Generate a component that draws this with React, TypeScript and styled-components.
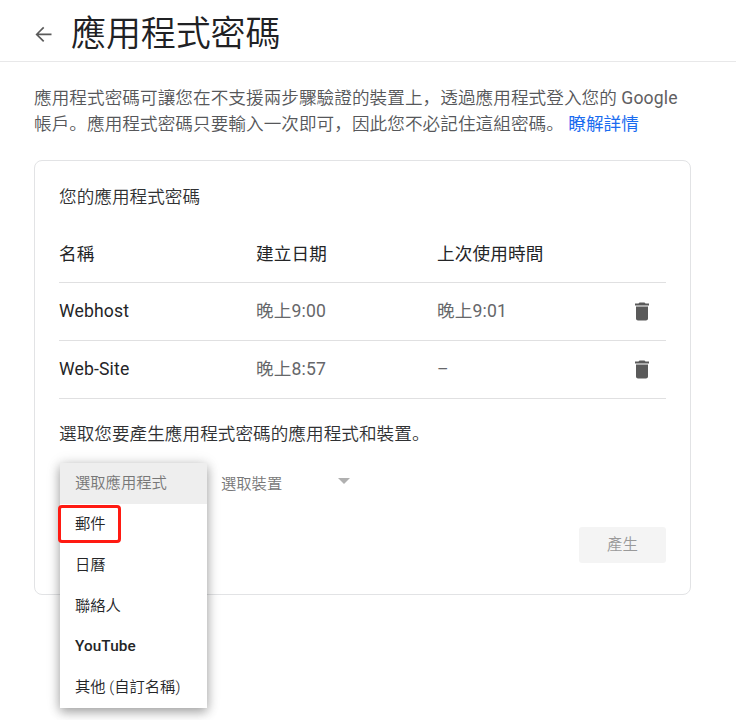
import React from 'react';
import styled, { createGlobalStyle } from 'styled-components';

const Global = createGlobalStyle`
  * { box-sizing: border-box; }
  body { margin: 0; background: #fff; color: #202124; overflow: hidden;
    font-family: Roboto, "Noto Sans CJK SC", sans-serif; font-weight: 350; }
`;
const Page = styled.div`width: 736px; height: 720px; overflow: hidden;`;
const Header = styled.header`
  height: 62px; display: flex; align-items: center; padding: 8px 0 0 31px; gap: 16px;
  border-bottom: 1px solid #e8e8e9;
`;
const IconSvg = styled.svg`display: block; fill: #5a5a5a;`;
const Title = styled.h1`
  margin: 0; padding-top: 1px; font-size: 35px; line-height: 52px; font-weight: 350; letter-spacing: -.1px; white-space: nowrap;
`;
const Intro = styled.p`
  margin: 24px 0 0 34px; font-size: 17.6px; line-height: 25.5px; color: #56575a;
  white-space: nowrap; letter-spacing: .07px;
`;
const Latin = styled.span`font-weight: 400; color: #5f6062; letter-spacing: .15px;`;
const Link = styled.a`color: #1a6cf0; text-decoration: none; font-weight: 400;`;
const Card = styled.section`
  margin: 23px 0 0 34px; width: 657px; height: 435px; border: 1px solid #e2e3e5;
  border-radius: 8px; padding: 23px 24px 0;
`;
const Text = styled.div`font-size: 17.6px; line-height: 26px; color: #303133; white-space: nowrap; letter-spacing: .05px;`;
const Row = styled.div<{ $head?: boolean }>`
  display: grid; grid-template-columns: 197px 181px 1fr 36px; align-items: center;
  height: ${p => (p.$head ? 73 : 58)}px; font-size: 17.6px;
  padding-top: ${p => (p.$head ? 17 : 0)}px;
  border-bottom: 1px solid #e0e0e1;
`;
const Cell = styled.span<{ $muted?: boolean }>`
  color: ${p => (p.$muted ? '#66676a' : '#242527')};
  font-weight: 400;
  letter-spacing: .15px; line-height: 26px; padding-bottom: 2px;
`;
const Prompt = styled(Text)`margin-top: 22px;`;
const Controls = styled.div`display: flex; height: 42px; margin-top: 16px; align-items: center;`;
const SelectAnchor = styled.div`position: relative; width: 148px; height: 42px; margin-right: 14px;`;
const Menu = styled.ul`
  position: absolute; left: 1px; top: 0; margin: 0; padding: 0; width: 147px; list-style: none;
  background: #fff; box-shadow: 0 4px 10px rgba(0,0,0,.3), 0 1px 14px rgba(0,0,0,.14); z-index: 1;
`;
const Item = styled.li<{ $active?: boolean; $medium?: boolean }>`
  height: 40.85px; line-height: 41.5px; padding-left: 15px; font-size: 15.3px; white-space: nowrap;
  font-weight: ${p => (p.$medium ? 500 : 350)};
  letter-spacing: ${p => (p.$medium ? '.1px' : 'normal')};
  color: ${p => (p.$active ? '#777' : '#242527')};
  background: ${p => (p.$active ? '#eee' : '#fff')};
`;
const Highlight = styled.div`
  position: absolute; z-index: 2; left: -1px; top: 42px; width: 63px; height: 38px;
  border: 3px solid #ff1a12; border-radius: 4px;
`;
const Device = styled.div`
  display: flex; width: 129px; align-items: center; justify-content: space-between;
  font-size: 15.3px; color: #777; padding-bottom: 5px;
`;
const Arrow = styled.svg`fill: #b0b0b0; display: block; margin-bottom: 2px;`;
const Actions = styled.div`display: flex; justify-content: flex-end; margin-top: 22px;`;
const Button = styled.button`
  width: 87px; height: 36px; border: 0; border-radius: 3px; background: #f4f4f4; color: #999;
  font: 350 15.4px Roboto, "Noto Sans CJK SC", sans-serif; padding: 0 0 4px;
`;

const passwords = [
  { name: 'Webhost', created: '晚上9:00', used: '晚上9:01' },
  { name: 'Web-Site', created: '晚上8:57', used: '–' },
];
const apps = ['選取應用程式', '郵件', '日曆', '聯絡人', 'YouTube', '其他 (自訂名稱)'];

const BackIcon = () => (
  <IconSvg width="24" height="24" viewBox="0 0 24 24">
    <path d="M20.5 10.6H7.6l5.7-5.6-1.2-1.2-7.6 7.6 7.6 7.6 1.2-1.2-5.7-5.6h12.9z" />
  </IconSvg>
);
const TrashIcon = () => (
  <IconSvg width="24" height="24" viewBox="0 0 24 24">
    <path d="M6 18.5c0 1.1.9 2 2 2h8c1.1 0 2-.9 2-2V6.5H6v12zM19 3.5h-3.5l-1-1h-5l-1 1H5v2h14v-2z" />
  </IconSvg>
);

export default function App() {
  return (
    <Page lang="zh-Hans">
      <Global />
      <Header><BackIcon /><Title>應用程式密碼</Title></Header>
      <Intro>
        應用程式密碼可讓您在不支援兩步驟驗證的裝置上，透過應用程式登入您的 <Latin>Google</Latin><br />
        帳戶。應用程式密碼只要輸入一次即可，因此您不必記住這組密碼。 <Link>瞭解詳情</Link>
      </Intro>
      <Card>
        <Text>您的應用程式密碼</Text>
        <Row $head><Cell>名稱</Cell><Cell>建立日期</Cell><Cell>上次使用時間</Cell></Row>
        {passwords.map(p => (
          <Row key={p.name}>
            <Cell>{p.name}</Cell><Cell $muted>{p.created}</Cell><Cell $muted>{p.used}</Cell>
            <TrashIcon />
          </Row>
        ))}
        <Prompt>選取您要產生應用程式密碼的應用程式和裝置。</Prompt>
        <Controls>
          <SelectAnchor>
            <Menu>
              {apps.map((a, i) => <Item key={a} $active={i === 0} $medium={a === 'YouTube'}>{a}</Item>)}
            </Menu>
            <Highlight />
          </SelectAnchor>
          <Device>選取裝置<Arrow width="12" height="6" viewBox="0 0 12 6"><path d="M0 0h12L6 6z" /></Arrow></Device>
        </Controls>
        <Actions><Button>產生</Button></Actions>
      </Card>
    </Page>
  );
}
